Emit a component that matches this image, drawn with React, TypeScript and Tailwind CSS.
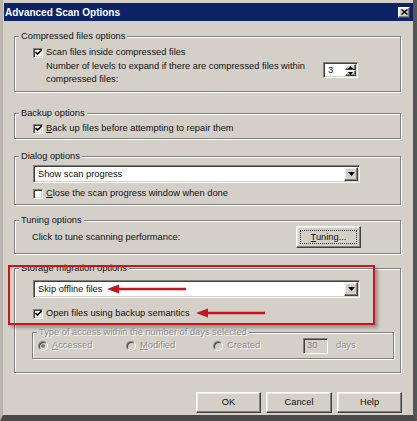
import type React from "react"

const raised =
  "border border-t-white border-l-white border-r-[#404040] border-b-[#404040] shadow-[inset_-1px_-1px_0_#808080,inset_1px_1px_0_#ecebe7] bg-[#d4d0c8]"
const sunken =
  "border border-t-[#808080] border-l-[#808080] border-r-white border-b-white shadow-[inset_1px_1px_0_#404040,inset_-1px_-1px_0_#d4d0c8]"

function Group({
  label,
  className,
  disabled,
  children,
}: {
  label: string
  className?: string
  disabled?: boolean
  children?: React.ReactNode
}) {
  return (
    <div className={`relative border border-[#808080] shadow-[inset_1px_1px_0_#fff,1px_1px_0_#fff] ${className ?? ""}`}>
      <span
        className={`absolute -top-[7px] left-[4px] bg-[#d4d0c8] px-[2px] leading-[13px] whitespace-nowrap ${
          disabled ? "text-[#8a8a8a] [text-shadow:1px_1px_0_#fff]" : ""
        }`}
      >
        {label}
      </span>
      {children}
    </div>
  )
}

function Checkbox({ checked }: { checked?: boolean }) {
  return (
    <span className={`flex h-[10px] w-[10px] shrink-0 items-center justify-center bg-white ${sunken}`}>
      {checked && (
        <svg width="7" height="7" viewBox="0 0 7 7">
          <path d="M0.5 3 L2.5 5 L6.5 1" stroke="#000" strokeWidth="1.6" fill="none" />
        </svg>
      )}
    </span>
  )
}

function CheckRow({ checked, children }: { checked?: boolean; children: React.ReactNode }) {
  return (
    <div className="flex h-[13px] items-center gap-[3px]">
      <Checkbox checked={checked} />
      <span className="leading-[13px]">{children}</span>
    </div>
  )
}

function DownArrow() {
  return (
    <svg width="7" height="4" viewBox="0 0 7 4">
      <path d="M0 0 H7 L3.5 4 Z" fill="#000" />
    </svg>
  )
}

function Dropdown({ value }: { value: string }) {
  return (
    <div className={`flex h-[18px] w-[327px] items-center bg-white p-[1px] ${sunken}`}>
      <span className="flex-1 pl-[3px] leading-[13px]">{value}</span>
      <span className={`flex h-[14px] w-[14px] items-center justify-center ${raised}`}>
        <DownArrow />
      </span>
    </div>
  )
}

function Radio({ checked, u, rest }: { checked?: boolean; u: string; rest: string }) {
  return (
    <div className="flex items-center gap-[4px]">
      <span className="relative flex h-[10px] w-[10px] items-center justify-center rounded-full border border-t-[#808080] border-l-[#808080] border-r-white border-b-white bg-[#d4d0c8] shadow-[inset_1px_1px_0_#404040]">
        {checked && <span className="h-[4px] w-[4px] rounded-full bg-[#808080]" />}
      </span>
      <span className="leading-[13px] text-[#8a8a8a] [text-shadow:1px_1px_0_#fff]">
        <span className="underline">{u}</span>
        {rest}
      </span>
    </div>
  )
}

function Arrow({ className, width }: { className: string; width: number }) {
  return (
    <svg className={`absolute ${className}`} width={width} height="10" viewBox={`0 0 ${width} 10`}>
      <path d={`M10 5 H${width}`} stroke="#c8141c" strokeWidth="2.5" />
      <path d="M0 5 L12 0.5 L12 9.5 Z" fill="#c8141c" />
    </svg>
  )
}

function Button({ children, focus, className }: { children: React.ReactNode; focus?: boolean; className?: string }) {
  return (
    <div className={`relative flex h-[21px] items-center justify-center leading-[13px] ${raised} ${className ?? ""}`}>
      {focus && <span className="absolute inset-[3px] border border-dotted border-[#333]" />}
      {children}
    </div>
  )
}

export default function App() {
  return (
    <div
      className="relative flex h-[421px] w-[417px] flex-col overflow-hidden border-l-[3px] border-r-[4px] border-b-[6px] border-l-[#b9b5ad] border-r-[#555] border-b-[#4a4a4a] bg-[#d4d0c8] pt-[3px] text-[9.3px] text-[#111]"
      style={{ fontFamily: '"Liberation Sans", Arial, sans-serif' }}
    >
      {/* title bar */}
      <div className="ml-[1px] flex h-[18px] items-center justify-between bg-[#0c2466] pl-[1px] pr-[3px]">
        <span className="text-[10px] font-bold leading-[13px] text-white">Advanced Scan Options</span>
        <span className={`flex h-[11px] w-[12px] items-center justify-center ${raised}`}>
          <svg width="7" height="6" viewBox="0 0 7 6">
            <path d="M0.5 0.5 L6.5 5.5 M6.5 0.5 L0.5 5.5" stroke="#000" strokeWidth="1.4" />
          </svg>
        </span>
      </div>

      <div className="flex flex-col pl-[11px] pr-[12px]">
        <Group label="Compressed files options" className="mt-[15px] h-[56px] pl-[18px] pt-[9px]">
          <CheckRow checked>Scan files inside compressed files</CheckRow>
          <div className="mt-[1px] flex items-start pl-[13px]">
            <div className="leading-[13px]">
              Number of levels to expand if there are compressed files within
              <br />
              compressed files:
            </div>
            <div className={`ml-auto mr-[42px] mt-[2px] flex h-[16px] w-[35px] items-center bg-white p-[1px] ${sunken}`}>
              <span className="flex-1 pl-[3px] leading-[13px]">3</span>
              <span className="flex h-[12px] w-[11px] flex-col">
                <span className={`flex flex-1 items-center justify-center ${raised}`}>
                  <svg width="5" height="3" viewBox="0 0 5 3">
                    <path d="M0 3 H5 L2.5 0 Z" fill="#000" />
                  </svg>
                </span>
                <span className={`flex flex-1 items-center justify-center ${raised}`}>
                  <svg width="5" height="3" viewBox="0 0 5 3">
                    <path d="M0 0 H5 L2.5 3 Z" fill="#000" />
                  </svg>
                </span>
              </span>
            </div>
          </div>
        </Group>

        <Group label="Backup options" className="mt-[21px] h-[26px] pl-[18px] pt-[8px]">
          <CheckRow checked>
            <span className="underline">B</span>ack up files before attempting to repair them
          </CheckRow>
        </Group>

        <Group label="Dialog options" className="mt-[17px] h-[49px] pl-[18px] pt-[8px]">
          <Dropdown value="Show scan progress" />
          <div className="mt-[4px]">
            <CheckRow>
              <span className="underline">C</span>lose the scan progress window when done
            </CheckRow>
          </div>
        </Group>

        <Group label="Tuning options" className="mt-[15px] flex h-[34px] items-center pl-[17px]">
          <span className="leading-[13px]">Click to tune scanning performance:</span>
          <Button focus className="ml-auto mr-[39px] h-[22px] w-[65px]">
            <span>
              <span className="underline">T</span>uning...
            </span>
          </Button>
        </Group>

        <Group label="Storage migration options" className="mt-[14px] h-[105px] pl-[18px] pt-[11px]">
          <Dropdown value="Skip offline files" />
          <div className="mt-[9px]">
            <CheckRow checked>Open files using backup semantics</CheckRow>
          </div>
          <Group
            disabled
            label="Type of access within the number of days selected"
            className="-ml-[1px] mt-[12px] flex h-[27px] w-[362px] items-center pl-[5px]"
          >
            <div className="w-[88px]">
              <Radio checked u="A" rest="ccessed" />
            </div>
            <div className="w-[87px]">
              <Radio u="M" rest="odified" />
            </div>
            <div className="w-[90px]">
              <Radio u="" rest="Created" />
            </div>
            <span className={`flex h-[16px] w-[25px] items-center bg-[#d4d0c8] pl-[3px] text-[#8a8a8a] ${sunken}`}>30</span>
            <span className="ml-[8px] text-[#8a8a8a] [text-shadow:1px_1px_0_#fff]">days</span>
          </Group>
        </Group>

        <div className="mr-[-1px] mt-[19px] flex justify-end gap-[5px]">
          <Button className="w-[65px]">OK</Button>
          <Button className="w-[66px]">Cancel</Button>
          <Button className="w-[65px]">Help</Button>
        </div>
      </div>

      {/* annotation overlay */}
      <div className="absolute left-[5px] top-[265px] h-[60px] w-[367px] border-2 border-[#cc161e] shadow-[3px_3px_3px_rgba(0,0,0,0.28)]" />
      <Arrow className="left-[104px] top-[284px]" width={79} />
      <Arrow className="left-[193px] top-[308px]" width={69} />
    </div>
  )
}
